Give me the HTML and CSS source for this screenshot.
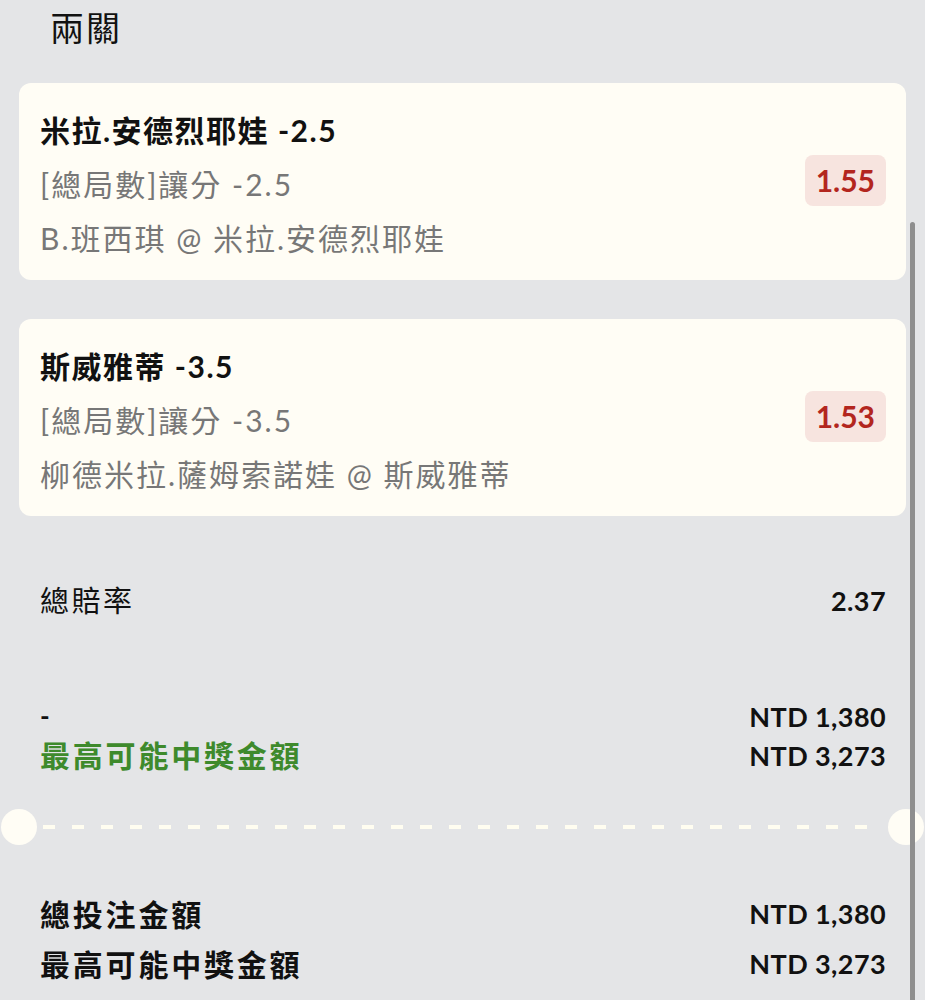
FILE: index.html
```html
<!DOCTYPE html>
<html>
<head>
  <meta charset="utf-8">
  <title>兩關</title>
  <link rel="stylesheet" href="styles.css">
</head>
<body>
  <div class="page">
    <h1 class="title">兩關</h1>

    <div class="bet-card">
      <div class="bet-info">
        <div class="bet-name">米拉.安德烈耶娃 -2.5</div>
        <div class="bet-line">[總局數]讓分 -2.5</div>
        <div class="bet-line">B.班西琪 @ 米拉.安德烈耶娃</div>
      </div>
      <div class="odds">1.55</div>
    </div>

    <div class="bet-card">
      <div class="bet-info">
        <div class="bet-name">斯威雅蒂 -3.5</div>
        <div class="bet-line">[總局數]讓分 -3.5</div>
        <div class="bet-line">柳德米拉.薩姆索諾娃 @ 斯威雅蒂</div>
      </div>
      <div class="odds">1.53</div>
    </div>

    <div class="row total-odds">
      <span>總賠率</span>
      <span class="num">2.37</span>
    </div>

    <div class="stake-block">
      <div class="row stake-row">
        <span class="dash">-</span>
        <span class="num">NTD 1,380</span>
      </div>
      <div class="row stake-row">
        <span class="win-label">最高可能中獎金額</span>
        <span class="num">NTD 3,273</span>
      </div>
    </div>

    <div class="divider">
      <span class="notch"></span>
      <span class="dashes"></span>
      <span class="notch"></span>
    </div>

    <div class="summary">
      <div class="row summary-row">
        <span>總投注金額</span>
        <span class="num">NTD 1,380</span>
      </div>
      <div class="row summary-row">
        <span>最高可能中獎金額</span>
        <span class="num">NTD 3,273</span>
      </div>
    </div>
  </div>

  <div class="scrollbar"></div>
</body>
</html>
```

FILE: styles.css
```css
body {
  margin: 0;
  background-color: #e4e5e7;
  font-family: Lato, "Noto Sans CJK TC", sans-serif;
  color: #111;
  overflow: hidden;
}

.page {
  padding: 0 19px;
}

.title {
  margin: 0;
  padding-left: 31px;
  font-size: 34px;
  font-weight: normal;
  line-height: 56px;
  letter-spacing: 2px;
}

.bet-card {
  display: flex;
  align-items: center;
  justify-content: space-between;
  margin-top: 27px;
  padding: 20px 20px 15px 21px;
  background-color: #fffdf5;
  border-radius: 12px;
}

.bet-card + .bet-card {
  margin-top: 39px;
}

.bet-name {
  font-size: 30px;
  font-weight: bold;
  line-height: 54px;
  letter-spacing: 1.5px;
}

.bet-line {
  font-size: 30px;
  line-height: 54px;
  color: #777;
  letter-spacing: 2px;
}

.odds {
  margin-bottom: 8px;
  padding: 0 11px;
  background-color: #f7e4df;
  color: #b3261e;
  border-radius: 8px;
  font-size: 30px;
  font-weight: bold;
  line-height: 51px;
}

.row {
  display: flex;
  justify-content: space-between;
  align-items: center;
  padding: 0 20px 0 21px;
}

.num {
  font-weight: bold;
  font-size: 27px;
  letter-spacing: 0.4px;
}

.total-odds {
  margin-top: 65px;
  font-size: 29px;
  line-height: 40px;
  letter-spacing: 2.5px;
}

.stake-block {
  margin-top: 76px;
}

.stake-row {
  line-height: 39px;
}

.dash {
  font-size: 26px;
  font-weight: bold;
}

.win-label {
  color: #3e8a2c;
  font-size: 30px;
  font-weight: bold;
  letter-spacing: 2.8px;
}

.divider {
  display: flex;
  align-items: center;
  margin: 34px -18px 0;
}

.notch {
  width: 36px;
  height: 36px;
  border-radius: 50%;
  background-color: #fffdf5;
  flex-shrink: 0;
}

.dashes {
  flex: 1;
  height: 4px;
  margin: 0 6px;
  background-image: repeating-linear-gradient(90deg, #fffdf0 0 12px, transparent 12px 29px);
}

.summary {
  margin-top: 44px;
}

.summary-row {
  line-height: 50px;
}

.summary-row span:first-child {
  font-size: 30px;
  font-weight: bold;
  letter-spacing: 2.8px;
}

.scrollbar {
  position: absolute;
  top: 222px;
  left: 910px;
  width: 5px;
  height: 800px;
  background-color: #8e8e8e;
  border-radius: 3px;
}
```
